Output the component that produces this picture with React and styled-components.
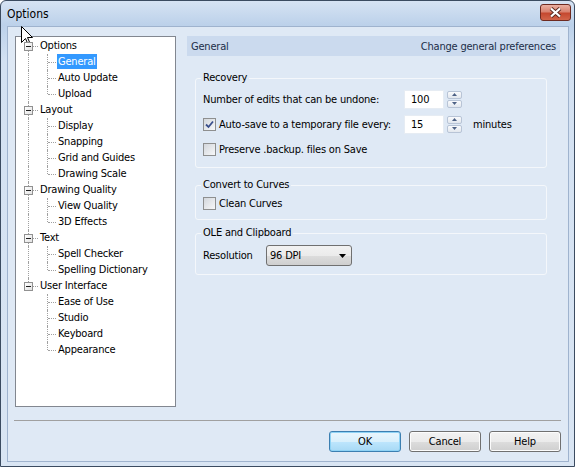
import React from "react";
import styled, { createGlobalStyle } from "styled-components";

const GlobalStyle = createGlobalStyle`
  html, body { margin: 0; padding: 0; background: #fff; }
  body {
    font-family: Tahoma, "DejaVu Sans Condensed", "Liberation Sans", sans-serif;
    font-size: 11px;
    letter-spacing: -0.2px;
    color: #000;
  }
  * { box-sizing: border-box; }
`;

const Window = styled.div`
  position: relative;
  width: 575px;
  height: 467px;
  border: 1px solid #3b4b60;
  border-radius: 6px 6px 0 0;
  background: linear-gradient(#d6e3f3, #bcd1ea 24px, #d3e1f2 60px, #d9e5f3);
  display: flex;
  flex-direction: column;
  overflow: hidden;
`;

const TitleBar = styled.div`
  height: 25px;
  display: flex;
  justify-content: space-between;
  align-items: flex-start;
  flex-shrink: 0;
`;

const Title = styled.span`
  font-size: 12px;
  letter-spacing: 0;
  line-height: 26px;
  padding-left: 6px;
  color: #000;
`;

const CloseButton = styled.div`
  width: 31px;
  height: 17px;
  margin: 3px 3px 0 0;
  border: 1px solid #6e2a20;
  border-radius: 3px;
  background: linear-gradient(#eab0a2, #d9826f 45%, #c5482f 55%, #d2654a);
  display: flex;
  align-items: center;
  justify-content: center;
`;

const Client = styled.div`
  flex: 1;
  margin: 0 5px 4px 6px;
  background: #dfe9f5;
  border: 1px solid #9fb3ce;
  display: flex;
  flex-direction: column;
  padding-top: 9px;
`;

const Main = styled.div`
  display: flex;
  height: 371px;
  padding-left: 7px;
`;

const TreePanel = styled.div`
  width: 161px;
  height: 371px;
  flex-shrink: 0;
  background: #fff;
  border: 1px solid #828790;
  padding-top: 1px;
`;

const TreeRow = styled.div`
  display: flex;
  height: 16px;
`;

const Lead = styled.div`
  position: relative;
  width: ${(p) => p.$w}px;
  flex-shrink: 0;
  &::before {
    content: "";
    display: ${(p) => (p.$line ? "block" : "none")};
    position: absolute;
    left: ${(p) => p.$x}px;
    top: ${(p) => p.$top}px;
    bottom: ${(p) => p.$bottom}px;
    border-left: 1px dotted #a0a0a0;
  }
  &::after {
    content: "";
    display: ${(p) => (p.$branch ? "block" : "none")};
    position: absolute;
    left: ${(p) => p.$bx}px;
    right: 0;
    top: 8px;
    border-top: 1px dotted #a0a0a0;
  }
`;

const Expander = styled.span`
  position: absolute;
  left: 8px;
  top: 4px;
  width: 9px;
  height: 9px;
  border: 1px solid #919191;
  background: linear-gradient(135deg, #fff, #e2e2e2);
  z-index: 1;
  &::after {
    content: "";
    position: absolute;
    left: 1px;
    top: 3px;
    width: 5px;
    height: 1px;
    background: #1f1f1f;
  }
`;

const TreeLabel = styled.span`
  margin-left: 1px;
  padding: 1px 1px 0;
  height: 15px;
  line-height: 14px;
  white-space: nowrap;
  background: ${(p) => (p.$selected ? "#3399ff" : "transparent")};
  color: ${(p) => (p.$selected ? "#fff" : "#000")};
`;

const Panel = styled.div`
  width: 373px;
  margin-left: 11px;
  display: flex;
  flex-direction: column;
`;

const Header = styled.div`
  height: 20px;
  background: #cbdaee;
  display: flex;
  align-items: center;
  justify-content: space-between;
  padding: 0 4px;
  color: #1b2d48;
`;

const Group = styled.fieldset`
  margin: ${(p) => p.$mt}px 13px 0 8px;
  padding: ${(p) => p.$pt}px 8px ${(p) => p.$pb}px 7px;
  border: 1px solid #f4f7fb;
  border-radius: 3px;
  min-width: 0;
`;

const Legend = styled.legend`
  padding: 0 2px;
  margin-left: -2px;
  line-height: 14px;
  color: #000;
`;

const Rows = styled.div`
  display: flex;
  flex-direction: column;
  gap: 5px;
`;

const FieldRow = styled.div`
  display: flex;
  align-items: center;
  height: ${(p) => p.$h || 20}px;
`;

const FieldLabel = styled.span`
  width: ${(p) => p.$w}px;
  flex-shrink: 0;
  white-space: nowrap;
`;

const Check = styled.span`
  width: 13px;
  height: 13px;
  flex-shrink: 0;
  border: 1px solid #8e8f8f;
  background: linear-gradient(135deg, #d3d7dc, #f7f8f9);
  display: flex;
  align-items: center;
  justify-content: center;
  margin-right: 3px;
`;

const Spin = styled.div`
  display: flex;
  gap: 3px;
  height: 19px;
`;

const SpinInput = styled.div`
  width: 40px;
  background: #fff;
  border: 1px solid #e6ecf3;
  padding-left: 6px;
  display: flex;
  align-items: center;
`;

const SpinButtons = styled.div`
  width: 15px;
  display: flex;
  flex-direction: column;
  gap: 1px;
  padding: 1px 0;
`;

const SpinButton = styled.div`
  flex: 1;
  border: 1px solid #b8c4d6;
  border-radius: 2px;
  background: linear-gradient(#fafbfd, #e2e7ee);
  display: flex;
  align-items: center;
  justify-content: center;
`;

const Unit = styled.span`
  margin-left: 11px;
`;

const Select = styled.div`
  width: 86px;
  height: 21px;
  border: 1px solid #707070;
  border-radius: 3px;
  background: linear-gradient(#f2f2f2, #ebebeb 50%, #dddddd 51%, #cfcfcf);
  display: flex;
  align-items: center;
  justify-content: space-between;
  padding: 0 5px 0 3px;
`;

const Separator = styled.div`
  height: 1px;
  background: #a0a0a0;
  margin: 13px 7px 0 6px;
`;

const Buttons = styled.div`
  display: flex;
  justify-content: flex-end;
  gap: 8px;
  margin-top: 10px;
  padding-right: 7px;
`;

const Button = styled.div`
  width: 72px;
  height: 21px;
  border: 1px solid ${(p) => (p.$default ? "#3c7fb1" : "#707070")};
  border-radius: 3px;
  background: ${(p) =>
    p.$default
      ? "linear-gradient(#eaf6fd, #d9f0fc 50%, #bee6fd 51%, #a7d9f5)"
      : "linear-gradient(#f2f2f2, #ebebeb 50%, #dddddd 51%, #cfcfcf)"};
  box-shadow: inset 0 0 0 1px ${(p) => (p.$default ? "#8fd3f5" : "#fcfcfc")};
  display: flex;
  align-items: center;
  justify-content: center;
`;

const Cursor = styled.svg`
  position: absolute;
  left: 20px;
  top: 25px;
`;

const tree = [
  { label: "Options", children: ["General", "Auto Update", "Upload"] },
  { label: "Layout", children: ["Display", "Snapping", "Grid and Guides", "Drawing Scale"] },
  { label: "Drawing Quality", children: ["View Quality", "3D Effects"] },
  { label: "Text", children: ["Spell Checker", "Spelling Dictionary"] },
  { label: "User Interface", children: ["Ease of Use", "Studio", "Keyboard", "Appearance"] },
];

const Arrow = ({ up }) => (
  <svg width="5" height="3" viewBox="0 0 5 3">
    <path d={up ? "M2.5 0 L5 3 L0 3 Z" : "M0 0 L5 0 L2.5 3 Z"} fill="#4d6185" />
  </svg>
);

const CheckMark = () => (
  <svg width="9" height="9" viewBox="0 0 9 9">
    <path d="M1 4.5 L3.5 7 L8 1.5" fill="none" stroke="#3a4f8c" strokeWidth="1.8" />
  </svg>
);

function SpinField({ value }) {
  return (
    <Spin>
      <SpinInput>{value}</SpinInput>
      <SpinButtons>
        <SpinButton><Arrow up /></SpinButton>
        <SpinButton><Arrow /></SpinButton>
      </SpinButtons>
    </Spin>
  );
}

function Tree() {
  return (
    <TreePanel>
      {tree.map((g, gi) => {
        const lastGroup = gi === tree.length - 1;
        return (
          <React.Fragment key={g.label}>
            <TreeRow>
              <Lead
                $w={22}
                $x={12}
                $line
                $top={gi === 0 ? 8 : 0}
                $bottom={lastGroup ? 8 : 0}
                $branch
                $bx={17}
              >
                <Expander />
              </Lead>
              <TreeLabel>{g.label}</TreeLabel>
            </TreeRow>
            {g.children.map((c, ci) => (
              <TreeRow key={c}>
                <Lead $w={22} $x={12} $line={!lastGroup} $top={0} $bottom={0} />
                <Lead
                  $w={18}
                  $x={9}
                  $line
                  $top={0}
                  $bottom={ci === g.children.length - 1 ? 8 : 0}
                  $branch
                  $bx={10}
                />
                <TreeLabel $selected={c === "General"}>{c}</TreeLabel>
              </TreeRow>
            ))}
          </React.Fragment>
        );
      })}
    </TreePanel>
  );
}

export default function App() {
  return (
    <Window>
      <GlobalStyle />
      <TitleBar>
        <Title>Options</Title>
        <CloseButton>
          <svg width="13" height="11" viewBox="0 0 13 11">
            <path d="M2 1.5 L11 9.5 M11 1.5 L2 9.5" stroke="#5a2a22" strokeWidth="4" />
            <path d="M2 1.5 L11 9.5 M11 1.5 L2 9.5" stroke="#fff" strokeWidth="2.2" />
          </svg>
        </CloseButton>
      </TitleBar>
      <Client>
        <Main>
          <Tree />
          <Panel>
            <Header>
              <span>General</span>
              <span>Change general preferences</span>
            </Header>
            <Group $mt={15} $pt={4} $pb={8}>
              <Legend>Recovery</Legend>
              <Rows>
                <FieldRow>
                  <FieldLabel $w={201}>Number of edits that can be undone:</FieldLabel>
                  <SpinField value="100" />
                </FieldRow>
                <FieldRow>
                  <Check><CheckMark /></Check>
                  <FieldLabel $w={185}>Auto-save to a temporary file every:</FieldLabel>
                  <SpinField value="15" />
                  <Unit>minutes</Unit>
                </FieldRow>
                <FieldRow>
                  <Check />
                  <span>Preserve .backup. files on Save</span>
                </FieldRow>
              </Rows>
            </Group>
            <Group $mt={10} $pt={1} $pb={6}>
              <Legend>Convert to Curves</Legend>
              <FieldRow>
                <Check />
                <span>Clean Curves</span>
              </FieldRow>
            </Group>
            <Group $mt={6} $pt={5} $pb={8}>
              <Legend>OLE and Clipboard</Legend>
              <FieldRow $h={21}>
                <FieldLabel $w={63}>Resolution</FieldLabel>
                <Select>
                  <span>96 DPI</span>
                  <svg width="7" height="4" viewBox="0 0 7 4">
                    <path d="M0 0 L7 0 L3.5 4 Z" fill="#000" />
                  </svg>
                </Select>
              </FieldRow>
            </Group>
          </Panel>
        </Main>
        <Separator />
        <Buttons>
          <Button $default>OK</Button>
          <Button>Cancel</Button>
          <Button>Help</Button>
        </Buttons>
      </Client>
      <Cursor width="13" height="21" viewBox="0 0 13 21">
        <path
          d="M0.5 0.5 L0.5 16.5 L4.5 12.5 L7.5 19.5 L9.5 18.5 L6.5 11.5 L11.5 11.5 Z"
          fill="#fff"
          stroke="#000"
          strokeWidth="1"
        />
      </Cursor>
    </Window>
  );
}
